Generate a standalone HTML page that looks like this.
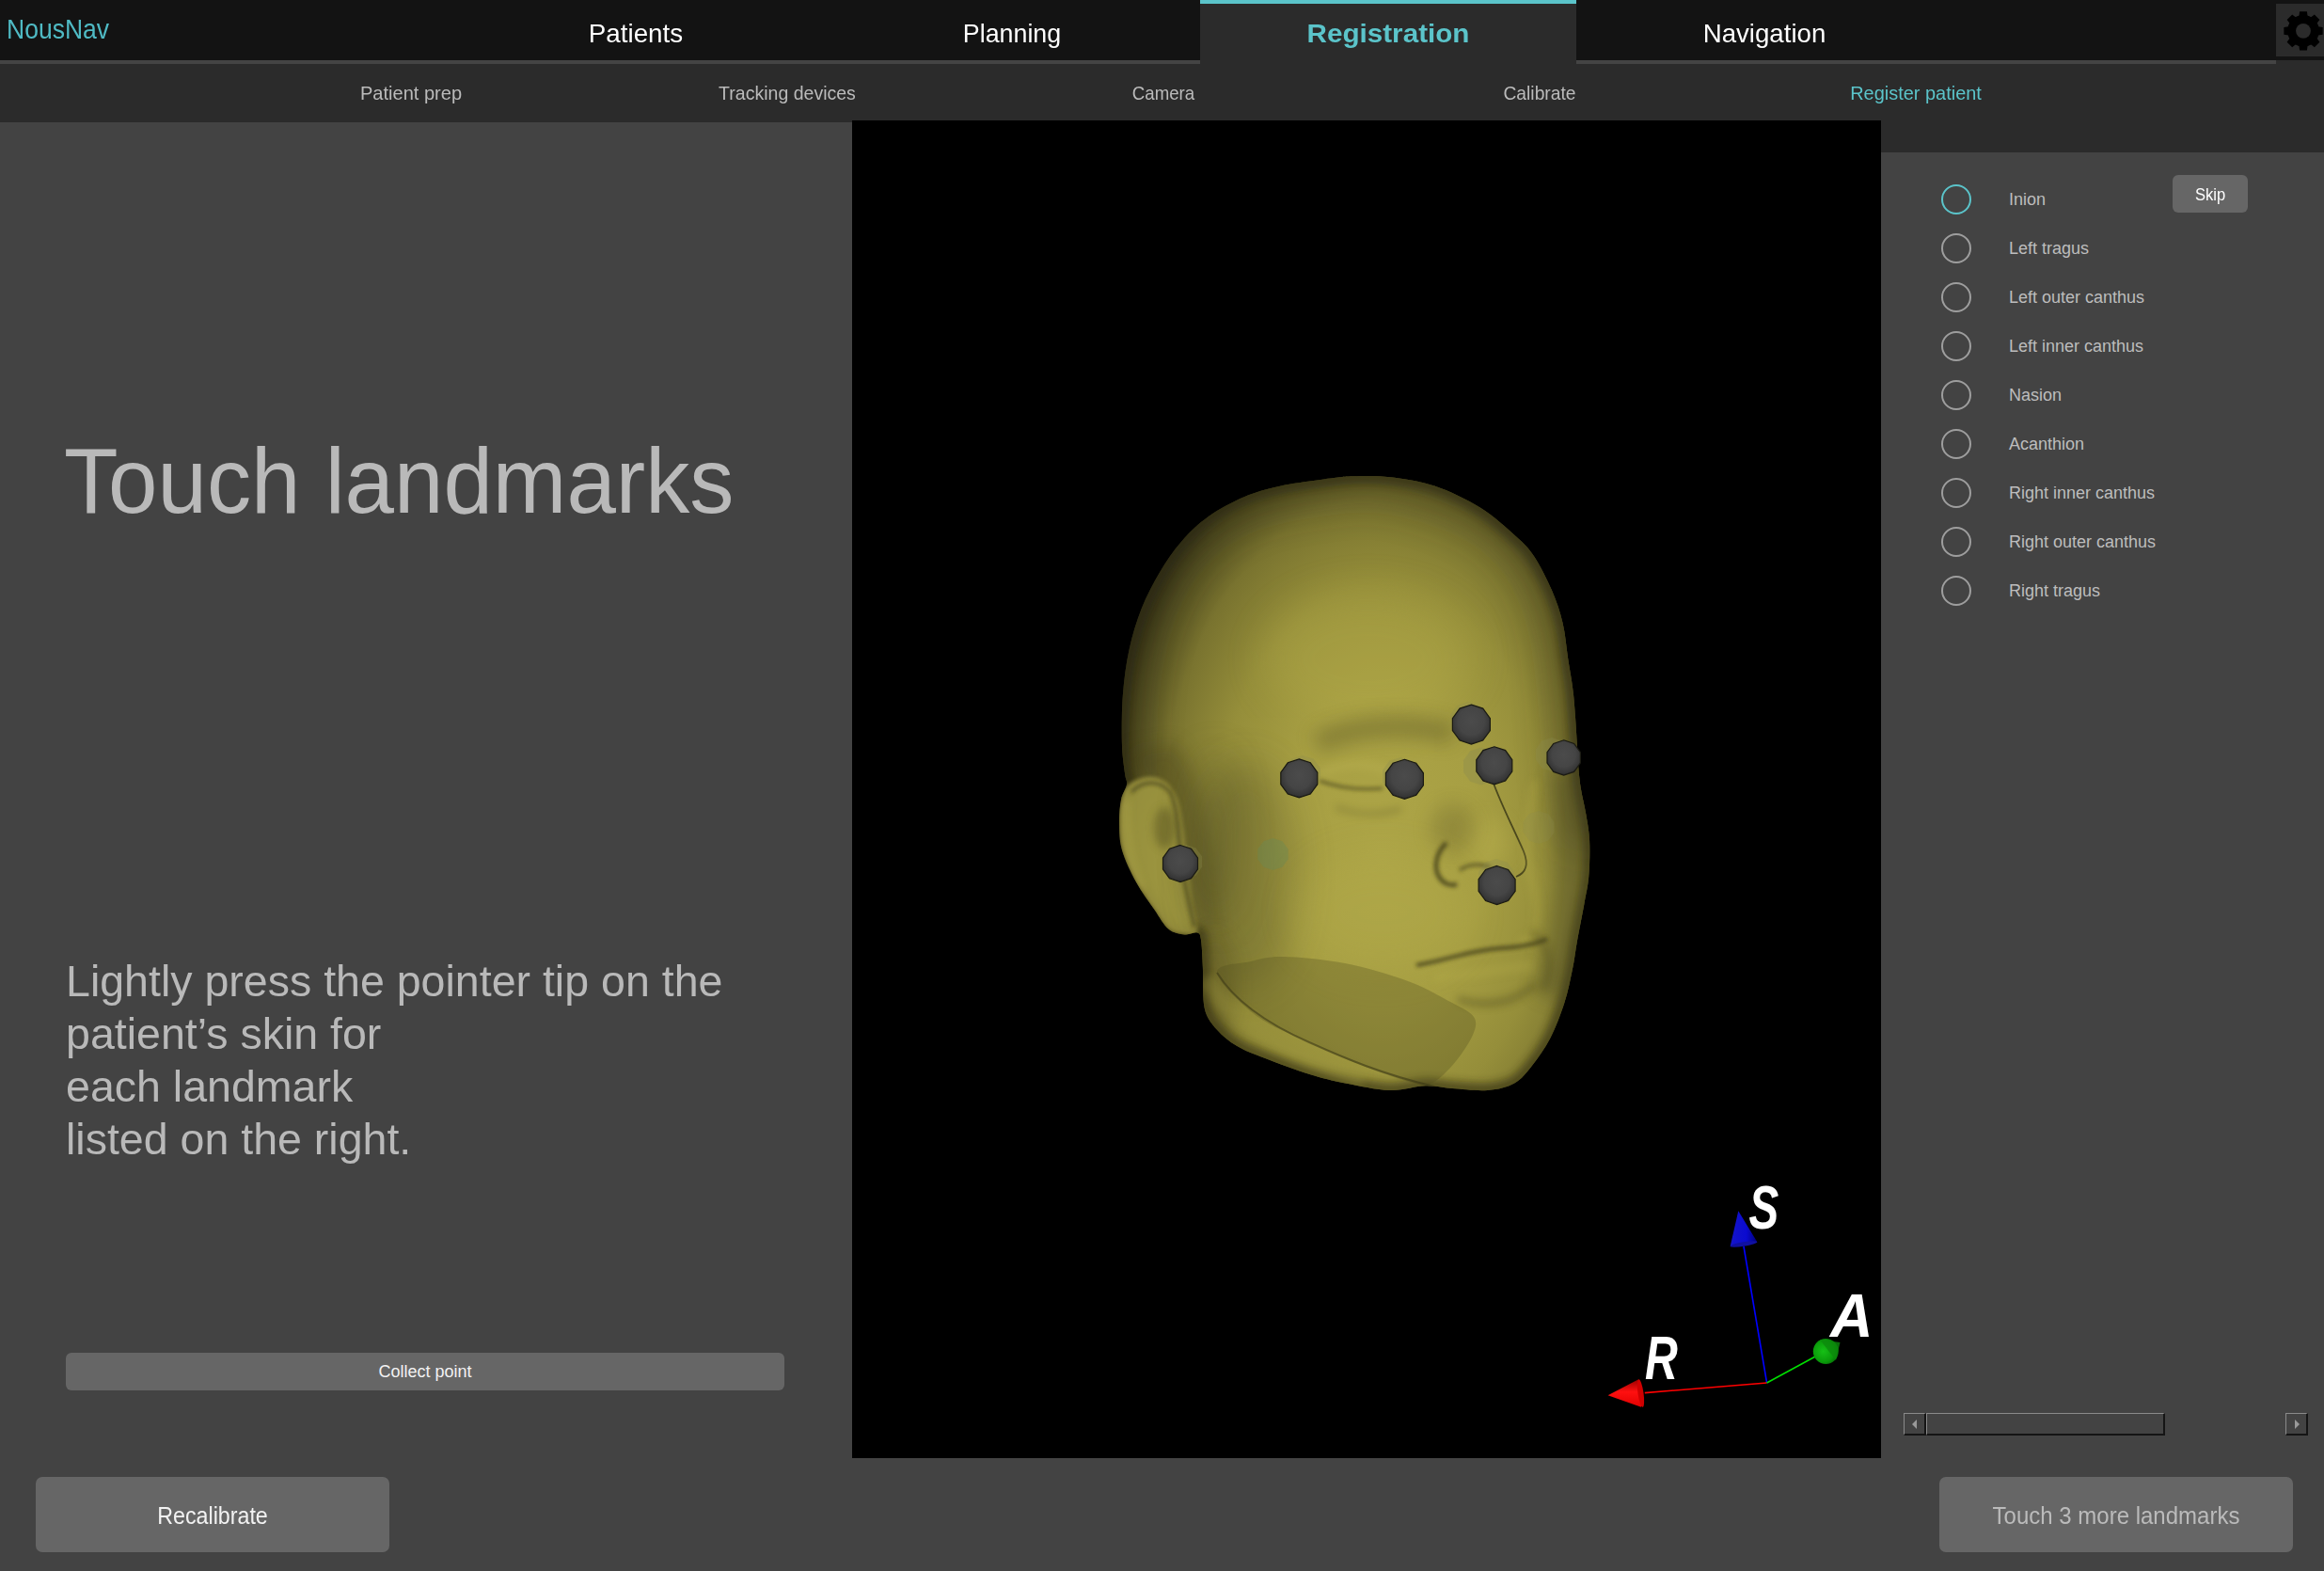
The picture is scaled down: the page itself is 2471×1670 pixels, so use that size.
<!DOCTYPE html>
<html><head><meta charset="utf-8">
<style>
*{margin:0;padding:0;box-sizing:border-box}
html,body{width:2471px;height:1670px;overflow:hidden;background:#434343;font-family:"Liberation Sans",sans-serif;position:relative}
.a{position:absolute}
.t{position:absolute;white-space:nowrap;line-height:1}
</style></head><body>
<!-- top bar -->
<div class="a" style="left:0;top:0;width:2471px;height:64px;background:#131313"></div>
<div class="a" style="left:0;top:64px;width:1276px;height:4px;background:#444"></div>
<div class="a" style="left:1676px;top:64px;width:744px;height:4px;background:#444"></div>
<div class="a" style="left:2420px;top:64px;width:51px;height:4px;background:#2b2b2b"></div>
<div class="a" style="left:1276px;top:0;width:400px;height:68px;background:#2b2b2b"></div>
<div class="a" style="left:1276px;top:0;width:400px;height:4px;background:#5bc4ca"></div>
<div class="a" style="left:2420px;top:4px;width:51px;height:56px;background:#2b2b2b"></div>
<div class="t" style="left:7px;top:17px;font-size:29px;color:#4fbac4;transform:scaleX(0.915);transform-origin:0 0">NousNav</div>
<div class="t" style="left:476px;top:21px;width:400px;text-align:center;font-size:28.5px;color:#fff;transform:scaleX(0.975)">Patients</div>
<div class="t" style="left:876px;top:21px;width:400px;text-align:center;font-size:28.5px;color:#fff;transform:scaleX(0.94)">Planning</div>
<div class="t" style="left:1276px;top:21px;width:400px;text-align:center;font-size:28.5px;color:#5bc4ca;font-weight:bold;transform:scaleX(1.04)">Registration</div>
<div class="t" style="left:1676px;top:21px;width:400px;text-align:center;font-size:28.5px;color:#fff;transform:scaleX(0.97)">Navigation</div>
<!-- sub bar -->
<div class="a" style="left:0;top:68px;width:2471px;height:62px;background:#2b2b2b"></div>
<div class="a" style="left:2000px;top:128px;width:471px;height:34px;background:#2b2b2b"></div>
<div class="t" style="left:237px;top:88px;width:400px;text-align:center;font-size:21px;color:#bbb;transform:scaleX(0.955)">Patient prep</div>
<div class="t" style="left:637px;top:88px;width:400px;text-align:center;font-size:21px;color:#bbb;transform:scaleX(0.93)">Tracking devices</div>
<div class="t" style="left:1037px;top:88px;width:400px;text-align:center;font-size:21px;color:#bbb;transform:scaleX(0.89)">Camera</div>
<div class="t" style="left:1437px;top:88px;width:400px;text-align:center;font-size:21px;color:#bbb;transform:scaleX(0.917)">Calibrate</div>
<div class="t" style="left:1837px;top:88px;width:400px;text-align:center;font-size:21px;color:#5bc4ca;transform:scaleX(0.95)">Register patient</div>
<!-- viewport -->
<div class="a" id="vp" style="left:906px;top:128px;width:1094px;height:1422px;background:#000"></div>
<svg class="a" style="left:906px;top:128px" width="1094" height="1422" viewBox="906 128 1094 1422">
<defs>
<radialGradient id="hg" gradientUnits="userSpaceOnUse" cx="0" cy="0" r="1" gradientTransform="translate(1470 905) scale(300 470)">
<stop offset="0" stop-color="#ada547"/><stop offset="0.35" stop-color="#a79f43"/><stop offset="0.6" stop-color="#958e3a"/><stop offset="0.8" stop-color="#79732f"/><stop offset="0.93" stop-color="#524e20"/><stop offset="1" stop-color="#363318"/></radialGradient>
<radialGradient id="sg" cx="0.5" cy="0.42" r="0.58"><stop offset="0" stop-color="#4b4b4b"/><stop offset="0.6" stop-color="#454545"/><stop offset="0.9" stop-color="#353535"/><stop offset="1" stop-color="#262626"/></radialGradient>
<filter id="b2" filterUnits="userSpaceOnUse" x="906" y="128" width="1094" height="1422"><feGaussianBlur stdDeviation="2"/></filter>
<filter id="b4" filterUnits="userSpaceOnUse" x="906" y="128" width="1094" height="1422"><feGaussianBlur stdDeviation="4"/></filter>
<filter id="b10" filterUnits="userSpaceOnUse" x="906" y="128" width="1094" height="1422"><feGaussianBlur stdDeviation="10"/></filter>
<filter id="b20" filterUnits="userSpaceOnUse" x="906" y="128" width="1094" height="1422"><feGaussianBlur stdDeviation="20"/></filter>
<clipPath id="hc"><path d="M1192.9 790.0 C1192.6 776.0 1192.6 754.8 1193.9 738.2 C1195.2 721.6 1197.3 705.8 1200.6 690.5 C1203.9 675.2 1208.5 660.3 1213.9 646.6 C1219.3 632.9 1226.0 620.2 1233.0 608.4 C1240.0 596.6 1247.3 585.8 1255.9 575.9 C1264.5 566.0 1273.4 557.2 1284.6 549.2 C1295.8 541.2 1310.1 533.6 1322.8 528.2 C1335.5 522.8 1345.1 520.1 1361.0 516.7 C1376.9 513.4 1405.0 509.9 1418.2 508.1 C1431.4 506.4 1430.0 506.4 1440.0 506.2 C1450.0 506.0 1463.9 505.4 1478.2 507.2 C1492.5 508.9 1510.0 511.3 1525.9 516.7 C1541.8 522.1 1559.4 530.7 1573.7 539.6 C1588.0 548.5 1602.4 561.6 1611.9 570.2 C1621.5 578.8 1624.7 581.7 1631.0 591.2 C1637.3 600.8 1644.9 615.7 1650.0 627.5 C1655.1 639.3 1658.6 649.8 1661.5 661.9 C1664.4 674.0 1665.3 687.3 1667.2 700.0 C1669.1 712.7 1671.4 723.2 1673.0 738.2 C1674.6 753.2 1676.0 778.3 1676.8 790.0 C1677.6 801.7 1677.1 800.4 1677.7 808.2 C1678.3 816.0 1679.2 827.2 1680.6 836.8 C1682.0 846.3 1684.7 856.0 1686.3 865.5 C1687.9 875.0 1689.6 883.0 1690.1 894.1 C1690.6 905.2 1690.2 921.1 1689.2 932.3 C1688.2 943.4 1686.4 949.7 1684.4 961.0 C1682.4 972.3 1679.1 988.5 1677.0 1000.0 C1674.9 1011.5 1674.3 1019.0 1672.0 1030.0 C1669.7 1041.0 1667.3 1054.0 1663.3 1066.3 C1659.3 1078.6 1653.8 1093.1 1648.1 1104.1 C1642.4 1115.1 1635.5 1124.6 1629.2 1132.5 C1622.9 1140.4 1618.1 1147.1 1610.2 1151.5 C1602.3 1155.9 1592.8 1158.1 1581.8 1159.0 C1570.8 1159.9 1555.0 1157.9 1544.0 1157.1 C1533.0 1156.3 1526.6 1154.0 1515.6 1154.3 C1504.5 1154.6 1491.9 1159.5 1477.7 1159.0 C1463.5 1158.5 1444.6 1154.3 1430.4 1151.5 C1416.2 1148.7 1406.7 1146.4 1392.5 1142.0 C1378.3 1137.6 1358.1 1130.0 1345.2 1125.0 C1332.3 1120.0 1323.4 1116.8 1314.9 1111.7 C1306.4 1106.7 1299.8 1101.3 1294.1 1094.7 C1288.4 1088.1 1283.3 1083.0 1280.8 1071.9 C1278.3 1060.9 1279.5 1040.6 1278.9 1028.4 C1278.3 1016.3 1278.0 1005.1 1277.0 999.0 C1276.0 992.9 1275.9 992.4 1273.0 991.5 C1270.1 990.6 1264.8 994.0 1259.7 993.4 C1254.6 992.8 1248.0 992.2 1242.6 987.7 C1237.2 983.2 1233.0 975.0 1227.3 966.7 C1221.6 958.4 1213.9 948.5 1208.2 938.0 C1202.5 927.5 1196.0 914.2 1193.0 903.7 C1190.0 893.2 1190.2 884.0 1190.0 875.0 C1189.8 866.0 1190.7 856.8 1192.0 850.0 C1193.3 843.2 1197.3 838.7 1198.0 834.0 C1198.7 829.3 1196.8 829.3 1196.0 822.0 C1195.2 814.7 1193.2 804.0 1192.9 790.0Z"/></clipPath>
</defs>
<path d="M1192.9 790.0 C1192.6 776.0 1192.6 754.8 1193.9 738.2 C1195.2 721.6 1197.3 705.8 1200.6 690.5 C1203.9 675.2 1208.5 660.3 1213.9 646.6 C1219.3 632.9 1226.0 620.2 1233.0 608.4 C1240.0 596.6 1247.3 585.8 1255.9 575.9 C1264.5 566.0 1273.4 557.2 1284.6 549.2 C1295.8 541.2 1310.1 533.6 1322.8 528.2 C1335.5 522.8 1345.1 520.1 1361.0 516.7 C1376.9 513.4 1405.0 509.9 1418.2 508.1 C1431.4 506.4 1430.0 506.4 1440.0 506.2 C1450.0 506.0 1463.9 505.4 1478.2 507.2 C1492.5 508.9 1510.0 511.3 1525.9 516.7 C1541.8 522.1 1559.4 530.7 1573.7 539.6 C1588.0 548.5 1602.4 561.6 1611.9 570.2 C1621.5 578.8 1624.7 581.7 1631.0 591.2 C1637.3 600.8 1644.9 615.7 1650.0 627.5 C1655.1 639.3 1658.6 649.8 1661.5 661.9 C1664.4 674.0 1665.3 687.3 1667.2 700.0 C1669.1 712.7 1671.4 723.2 1673.0 738.2 C1674.6 753.2 1676.0 778.3 1676.8 790.0 C1677.6 801.7 1677.1 800.4 1677.7 808.2 C1678.3 816.0 1679.2 827.2 1680.6 836.8 C1682.0 846.3 1684.7 856.0 1686.3 865.5 C1687.9 875.0 1689.6 883.0 1690.1 894.1 C1690.6 905.2 1690.2 921.1 1689.2 932.3 C1688.2 943.4 1686.4 949.7 1684.4 961.0 C1682.4 972.3 1679.1 988.5 1677.0 1000.0 C1674.9 1011.5 1674.3 1019.0 1672.0 1030.0 C1669.7 1041.0 1667.3 1054.0 1663.3 1066.3 C1659.3 1078.6 1653.8 1093.1 1648.1 1104.1 C1642.4 1115.1 1635.5 1124.6 1629.2 1132.5 C1622.9 1140.4 1618.1 1147.1 1610.2 1151.5 C1602.3 1155.9 1592.8 1158.1 1581.8 1159.0 C1570.8 1159.9 1555.0 1157.9 1544.0 1157.1 C1533.0 1156.3 1526.6 1154.0 1515.6 1154.3 C1504.5 1154.6 1491.9 1159.5 1477.7 1159.0 C1463.5 1158.5 1444.6 1154.3 1430.4 1151.5 C1416.2 1148.7 1406.7 1146.4 1392.5 1142.0 C1378.3 1137.6 1358.1 1130.0 1345.2 1125.0 C1332.3 1120.0 1323.4 1116.8 1314.9 1111.7 C1306.4 1106.7 1299.8 1101.3 1294.1 1094.7 C1288.4 1088.1 1283.3 1083.0 1280.8 1071.9 C1278.3 1060.9 1279.5 1040.6 1278.9 1028.4 C1278.3 1016.3 1278.0 1005.1 1277.0 999.0 C1276.0 992.9 1275.9 992.4 1273.0 991.5 C1270.1 990.6 1264.8 994.0 1259.7 993.4 C1254.6 992.8 1248.0 992.2 1242.6 987.7 C1237.2 983.2 1233.0 975.0 1227.3 966.7 C1221.6 958.4 1213.9 948.5 1208.2 938.0 C1202.5 927.5 1196.0 914.2 1193.0 903.7 C1190.0 893.2 1190.2 884.0 1190.0 875.0 C1189.8 866.0 1190.7 856.8 1192.0 850.0 C1193.3 843.2 1197.3 838.7 1198.0 834.0 C1198.7 829.3 1196.8 829.3 1196.0 822.0 C1195.2 814.7 1193.2 804.0 1192.9 790.0Z" fill="url(#hg)"/>
<g clip-path="url(#hc)">
<path d="M1192.9 790.0 C1192.6 776.0 1192.6 754.8 1193.9 738.2 C1195.2 721.6 1197.3 705.8 1200.6 690.5 C1203.9 675.2 1208.5 660.3 1213.9 646.6 C1219.3 632.9 1226.0 620.2 1233.0 608.4 C1240.0 596.6 1247.3 585.8 1255.9 575.9 C1264.5 566.0 1273.4 557.2 1284.6 549.2 C1295.8 541.2 1310.1 533.6 1322.8 528.2 C1335.5 522.8 1345.1 520.1 1361.0 516.7 C1376.9 513.4 1405.0 509.9 1418.2 508.1 C1431.4 506.4 1430.0 506.4 1440.0 506.2 C1450.0 506.0 1463.9 505.4 1478.2 507.2 C1492.5 508.9 1510.0 511.3 1525.9 516.7 C1541.8 522.1 1559.4 530.7 1573.7 539.6 C1588.0 548.5 1602.4 561.6 1611.9 570.2 C1621.5 578.8 1624.7 581.7 1631.0 591.2 C1637.3 600.8 1644.9 615.7 1650.0 627.5 C1655.1 639.3 1658.6 649.8 1661.5 661.9 C1664.4 674.0 1665.3 687.3 1667.2 700.0 C1669.1 712.7 1671.4 723.2 1673.0 738.2 C1674.6 753.2 1676.0 778.3 1676.8 790.0 C1677.6 801.7 1677.1 800.4 1677.7 808.2 C1678.3 816.0 1679.2 827.2 1680.6 836.8 C1682.0 846.3 1684.7 856.0 1686.3 865.5 C1687.9 875.0 1689.6 883.0 1690.1 894.1 C1690.6 905.2 1690.2 921.1 1689.2 932.3 C1688.2 943.4 1686.4 949.7 1684.4 961.0 C1682.4 972.3 1679.1 988.5 1677.0 1000.0 C1674.9 1011.5 1674.3 1019.0 1672.0 1030.0 C1669.7 1041.0 1667.3 1054.0 1663.3 1066.3 C1659.3 1078.6 1653.8 1093.1 1648.1 1104.1 C1642.4 1115.1 1635.5 1124.6 1629.2 1132.5 C1622.9 1140.4 1618.1 1147.1 1610.2 1151.5 C1602.3 1155.9 1592.8 1158.1 1581.8 1159.0 C1570.8 1159.9 1555.0 1157.9 1544.0 1157.1 C1533.0 1156.3 1526.6 1154.0 1515.6 1154.3 C1504.5 1154.6 1491.9 1159.5 1477.7 1159.0 C1463.5 1158.5 1444.6 1154.3 1430.4 1151.5 C1416.2 1148.7 1406.7 1146.4 1392.5 1142.0 C1378.3 1137.6 1358.1 1130.0 1345.2 1125.0 C1332.3 1120.0 1323.4 1116.8 1314.9 1111.7 C1306.4 1106.7 1299.8 1101.3 1294.1 1094.7 C1288.4 1088.1 1283.3 1083.0 1280.8 1071.9 C1278.3 1060.9 1279.5 1040.6 1278.9 1028.4 C1278.3 1016.3 1278.0 1005.1 1277.0 999.0 C1276.0 992.9 1275.9 992.4 1273.0 991.5 C1270.1 990.6 1264.8 994.0 1259.7 993.4 C1254.6 992.8 1248.0 992.2 1242.6 987.7 C1237.2 983.2 1233.0 975.0 1227.3 966.7 C1221.6 958.4 1213.9 948.5 1208.2 938.0 C1202.5 927.5 1196.0 914.2 1193.0 903.7 C1190.0 893.2 1190.2 884.0 1190.0 875.0 C1189.8 866.0 1190.7 856.8 1192.0 850.0 C1193.3 843.2 1197.3 838.7 1198.0 834.0 C1198.7 829.3 1196.8 829.3 1196.0 822.0 C1195.2 814.7 1193.2 804.0 1192.9 790.0Z" fill="none" stroke="#2a2810" stroke-width="16" opacity="0.6" filter="url(#b4)"/>
<path d="M1192.0 860.0 C1192.3 839.7 1190.2 773.8 1193.9 738.2 C1197.6 702.6 1203.6 673.7 1213.9 646.6 C1224.2 619.5 1237.8 595.6 1255.9 575.9 C1274.1 556.2 1295.8 539.5 1322.8 528.2 C1349.8 516.9 1392.3 511.6 1418.2 508.1 C1444.1 504.6 1452.3 501.9 1478.2 507.2 C1504.1 512.5 1548.2 525.6 1573.7 539.6 C1599.2 553.6 1616.4 570.8 1631.0 591.2 C1645.6 611.6 1654.5 637.4 1661.5 661.9 C1668.5 686.4 1669.8 709.1 1673.0 738.2 C1676.2 767.4 1677.8 809.8 1680.6 836.8 C1683.4 863.8 1688.4 889.5 1690.0 900.0" fill="none" stroke="#2e2b12" stroke-width="50" opacity="0.4" filter="url(#b20)"/>
<path d="M1195 800 C1230 830 1250 900 1270 990 L1300 990 C1290 900 1280 830 1250 790 Z" fill="#3c3917" opacity="0.35" filter="url(#b10)"/>
<path d="M1200.0 834.0 C1205.0 830.0 1215.3 826.3 1222.0 826.0 C1228.7 825.7 1235.0 828.0 1240.0 832.0 C1245.0 836.0 1249.0 842.0 1252.0 850.0 C1255.0 858.0 1256.2 868.3 1258.0 880.0 C1259.8 891.7 1261.3 906.7 1263.0 920.0 C1264.7 933.3 1266.3 948.2 1268.0 960.0 C1269.7 971.8 1274.3 985.5 1273.0 991.0 C1271.7 996.5 1265.0 993.5 1260.0 993.0 C1255.0 992.5 1248.5 992.3 1243.0 988.0 C1237.5 983.7 1232.8 975.3 1227.0 967.0 C1221.2 958.7 1213.7 948.5 1208.0 938.0 C1202.3 927.5 1196.0 914.5 1193.0 904.0 C1190.0 893.5 1190.2 884.0 1190.0 875.0 C1189.8 866.0 1190.3 856.8 1192.0 850.0 C1193.7 843.2 1195.0 838.0 1200.0 834.0Z" fill="#a29a42" opacity="0.85" filter="url(#b2)"/>
<path d="M1203 842 C1214 830 1232 828 1244 842 C1254 860 1252 900 1258 930 C1262 950 1266 970 1270 985" fill="none" stroke="#3a3716" stroke-width="3.5" opacity="0.65" filter="url(#b2)"/>
<ellipse cx="1238" cy="880" rx="11" ry="22" fill="#5a5524" opacity="0.5" filter="url(#b4)"/>
<path d="M1198 850 C1196 880 1200 915 1215 945" fill="none" stroke="#c4bb55" stroke-width="6" opacity="0.35" filter="url(#b4)"/>
<ellipse cx="1325" cy="930" rx="55" ry="120" fill="#4a4620" opacity="0.3" filter="url(#b20)"/>
<ellipse cx="1292" cy="1050" rx="22" ry="60" fill="#3c3917" opacity="0.3" filter="url(#b10)"/>
<ellipse cx="1292" cy="890" rx="22" ry="90" fill="#4a4620" opacity="0.35" filter="url(#b20)"/>
<ellipse cx="1455" cy="700" rx="110" ry="70" fill="#b2aa4a" opacity="0.35" filter="url(#b20)"/>
<ellipse cx="1470" cy="970" rx="90" ry="60" fill="#b4ac4b" opacity="0.35" filter="url(#b20)"/>
<path d="M1400 790 C1440 770 1500 768 1545 780" fill="none" stroke="#5a5523" stroke-width="22" opacity="0.45" filter="url(#b10)"/>
<path d="M1405 822 C1430 808 1465 810 1485 826" fill="none" stroke="#bdb452" stroke-width="10" opacity="0.35" filter="url(#b4)"/>
<path d="M1403 830 C1425 838 1450 840 1470 838" fill="none" stroke="#3e3b18" stroke-width="3" opacity="0.65" filter="url(#b2)"/>
<path d="M1420 858 C1445 868 1470 866 1490 860" fill="none" stroke="#5a5523" stroke-width="5" opacity="0.35" filter="url(#b4)"/>
<ellipse cx="1582" cy="895" rx="22" ry="26" fill="#b8af4e" opacity="0.45" filter="url(#b10)"/>
<ellipse cx="1545" cy="880" rx="24" ry="26" fill="#5e5925" opacity="0.28" filter="url(#b10)"/>
<path d="M1538 896 C1527 906 1524 922 1530 932 C1535 940 1543 942 1549 940" fill="none" stroke="#363315" stroke-width="4.5" opacity="0.75" filter="url(#b2)"/>
<path d="M1552 925 C1562 918 1575 918 1585 922" fill="none" stroke="#363315" stroke-width="3.5" opacity="0.6" filter="url(#b2)"/>
<path d="M1587 830 C1596 855 1608 878 1620 905 C1626 920 1622 928 1612 932" fill="none" stroke="#2e2c12" stroke-width="1.8" opacity="0.75"/>
<path d="M1632 830 C1626 870 1618 900 1630 940 C1640 980 1632 1000 1615 1002" fill="none" stroke="#c0b650" stroke-width="8" opacity="0.25" filter="url(#b4)"/>
<path d="M1668 820 C1675 930 1668 1000 1648 1060" fill="none" stroke="#4a4620" stroke-width="36" opacity="0.4" filter="url(#b10)"/>
<path d="M1506 1026 C1540 1020 1565 1010 1595 1008 C1615 1007 1632 1004 1645 998" fill="none" stroke="#363315" stroke-width="4" opacity="0.75" filter="url(#b2)"/>
<path d="M1525 1040 C1560 1036 1600 1030 1630 1026" fill="none" stroke="#b6ad4c" stroke-width="10" opacity="0.3" filter="url(#b4)"/>
<path d="M1550 1062 C1580 1072 1612 1066 1632 1046" fill="none" stroke="#4e4a1f" stroke-width="7" opacity="0.45" filter="url(#b4)"/>
<path d="M1628 990 C1648 1005 1652 1030 1640 1052" fill="none" stroke="#4e4a1f" stroke-width="8" opacity="0.35" filter="url(#b4)"/>
<path d="M1294.0 1034.0 C1293.0 1024.3 1318.3 1024.8 1330.0 1022.0 C1341.7 1019.2 1347.3 1016.7 1364.0 1017.0 C1380.7 1017.3 1407.8 1019.7 1430.0 1024.0 C1452.2 1028.3 1478.0 1036.0 1497.0 1043.0 C1516.0 1050.0 1532.3 1059.7 1544.0 1066.0 C1555.7 1072.3 1563.3 1075.3 1567.0 1081.0 C1570.7 1086.7 1569.2 1092.2 1566.0 1100.0 C1562.8 1107.8 1554.8 1119.7 1548.0 1128.0 C1541.2 1136.3 1532.0 1146.0 1525.0 1150.0 C1518.0 1154.0 1518.7 1154.8 1506.0 1152.0 C1493.3 1149.2 1468.0 1140.3 1449.0 1133.0 C1430.0 1125.7 1410.8 1116.8 1392.0 1108.0 C1373.2 1099.2 1352.3 1092.3 1336.0 1080.0 C1319.7 1067.7 1295.0 1043.7 1294.0 1034.0Z" fill="#4f4b1f" opacity="0.3"/>
<path d="M1294 1034 C1310 1060 1340 1085 1392 1108 C1430 1125 1470 1142 1525 1155" fill="none" stroke="#3a3716" stroke-width="2" opacity="0.6"/>
<path d="M1282 1040 C1300 1075 1350 1110 1450 1148" fill="none" stroke="#9a933e" stroke-width="18" opacity="0.35" filter="url(#b4)"/>
</g>
<polygon points="1636.0,861.9 1646.3,865.2 1652.6,874.0 1652.6,884.8 1646.3,893.6 1636.0,896.9 1625.7,893.6 1619.4,884.8 1619.4,874.0 1625.7,865.2" fill="#8a8a50" opacity="0.25"/>
<polygon points="1575.0,794.5 1586.8,798.3 1594.0,808.3 1594.0,820.7 1586.8,830.7 1575.0,834.5 1563.2,830.7 1556.0,820.7 1556.0,808.3 1563.2,798.3" fill="#8a8a50" opacity="0.35"/>
<polygon points="1650.0,784.0 1660.6,787.4 1667.1,796.4 1667.1,807.6 1660.6,816.6 1650.0,820.0 1639.4,816.6 1632.9,807.6 1632.9,796.4 1639.4,787.4" fill="#8a8a50" opacity="0.30"/>
<polygon points="1591.0,913.0 1602.8,916.8 1610.0,926.8 1610.0,939.2 1602.8,949.2 1591.0,953.0 1579.2,949.2 1572.0,939.2 1572.0,926.8 1579.2,916.8" fill="#8a8a50" opacity="0.30"/>
<polygon points="1261.0,898.0 1271.6,901.4 1278.1,910.4 1278.1,921.6 1271.6,930.6 1261.0,934.0 1250.4,930.6 1243.9,921.6 1243.9,910.4 1250.4,901.4" fill="#8a8a50" opacity="0.30"/>
<polygon points="1385.0,803.0 1396.8,806.8 1404.0,816.8 1404.0,829.2 1396.8,839.2 1385.0,843.0 1373.2,839.2 1366.0,829.2 1366.0,816.8 1373.2,806.8" fill="#8a8a50" opacity="0.30"/>
<polygon points="1489.0,805.0 1500.8,808.8 1508.0,818.8 1508.0,831.2 1500.8,841.2 1489.0,845.0 1477.2,841.2 1470.0,831.2 1470.0,818.8 1477.2,808.8" fill="#8a8a50" opacity="0.30"/>
<polygon points="1561.0,746.0 1572.8,749.8 1580.0,759.8 1580.0,772.2 1572.8,782.2 1561.0,786.0 1549.2,782.2 1542.0,772.2 1542.0,759.8 1549.2,749.8" fill="#8a8a50" opacity="0.25"/>
<polygon points="1255.0,898.5 1266.5,902.2 1273.5,912.0 1273.5,924.0 1266.5,933.8 1255.0,937.5 1243.5,933.8 1236.5,924.0 1236.5,912.0 1243.5,902.2" fill="url(#sg)" stroke="#1a1a12" stroke-width="1.2"/>
<polygon points="1381.3,806.9 1393.3,810.8 1400.8,821.1 1400.8,833.7 1393.3,844.0 1381.3,847.9 1369.3,844.0 1361.8,833.7 1361.8,821.1 1369.3,810.8" fill="url(#sg)" stroke="#1a1a12" stroke-width="1.2"/>
<polygon points="1493.4,807.3 1505.7,811.3 1513.4,821.8 1513.4,834.8 1505.7,845.3 1493.4,849.3 1481.1,845.3 1473.4,834.8 1473.4,821.8 1481.1,811.3" fill="url(#sg)" stroke="#1a1a12" stroke-width="1.2"/>
<polygon points="1564.4,749.1 1576.7,753.1 1584.4,763.6 1584.4,776.6 1576.7,787.1 1564.4,791.1 1552.1,787.1 1544.4,776.6 1544.4,763.6 1552.1,753.1" fill="url(#sg)" stroke="#1a1a12" stroke-width="1.2"/>
<polygon points="1588.8,793.8 1600.6,797.6 1607.8,807.6 1607.8,820.0 1600.6,830.0 1588.8,833.8 1577.0,830.0 1569.8,820.0 1569.8,807.6 1577.0,797.6" fill="url(#sg)" stroke="#1a1a12" stroke-width="1.2"/>
<polygon points="1662.7,786.8 1673.6,790.4 1680.4,799.7 1680.4,811.1 1673.6,820.4 1662.7,824.0 1651.8,820.4 1645.0,811.1 1645.0,799.7 1651.8,790.4" fill="url(#sg)" stroke="#1a1a12" stroke-width="1.2"/>
<polygon points="1591.6,920.5 1603.6,924.4 1611.1,934.7 1611.1,947.3 1603.6,957.6 1591.6,961.5 1579.6,957.6 1572.1,947.3 1572.1,934.7 1579.6,924.4" fill="url(#sg)" stroke="#1a1a12" stroke-width="1.2"/>
<polygon points="1353.5,891.0 1363.5,894.2 1369.7,902.7 1369.7,913.3 1363.5,921.8 1353.5,925.0 1343.5,921.8 1337.3,913.3 1337.3,902.7 1343.5,894.2" fill="#6a8a55" opacity="0.4"/>
<defs><linearGradient id="bc" x1="0" y1="0" x2="1" y2="0"><stop offset="0" stop-color="#1515c8"/><stop offset="0.6" stop-color="#0a0ad0"/><stop offset="1" stop-color="#00007a"/></linearGradient><linearGradient id="rc" x1="0" y1="0" x2="0" y2="1"><stop offset="0" stop-color="#9a0000"/><stop offset="0.45" stop-color="#ff1010"/><stop offset="1" stop-color="#e00000"/></linearGradient><radialGradient id="gc" cx="0.4" cy="0.5" r="0.6"><stop offset="0" stop-color="#16c016"/><stop offset="0.7" stop-color="#0a9a0a"/><stop offset="1" stop-color="#067006"/></radialGradient></defs>
<line x1="1878.6" y1="1470" x2="1854" y2="1325" stroke="#0000ff" stroke-width="1.6"/>
<line x1="1878.6" y1="1470" x2="1748.8" y2="1480.6" stroke="#ff0000" stroke-width="1.6"/>
<line x1="1878.6" y1="1470" x2="1929.7" y2="1442.3" stroke="#00e000" stroke-width="1.6"/>
<polygon points="1848.3,1287.2 1868.3,1320.2 1855,1324 1839.7,1324.7" fill="url(#bc)"/>
<ellipse cx="1854" cy="1322.5" rx="14.5" ry="2.2" transform="rotate(-9 1854 1322.5)" fill="#1010a0"/>
<polygon points="1709.6,1483.3 1741.7,1466.4 1747,1480 1745,1495.8" fill="url(#rc)"/>
<ellipse cx="1744.5" cy="1481" rx="3" ry="15" transform="rotate(-8 1744.5 1481)" fill="#d00000"/>
<circle cx="1941.3" cy="1436.5" r="13.5" fill="url(#gc)"/>
<polygon points="1935,1424 1956.5,1427 1952,1446" fill="#0c8a0c" opacity="0.8"/>
<text x="1859.5" y="1306.5" font-family="Liberation Sans" font-weight="bold" font-style="italic" font-size="64" fill="#fff" transform="translate(1859.5 0) scale(0.743 1) translate(-1859.5 0)">S</text>
<text x="1749" y="1466.4" font-family="Liberation Sans" font-weight="bold" font-style="italic" font-size="64" fill="#fff" transform="translate(1749 0) scale(0.753 1) translate(-1749 0)">R</text>
<text x="1946" y="1421" font-family="Liberation Sans" font-weight="bold" font-style="italic" font-size="64" fill="#fff" transform="translate(1946 0) scale(0.984 1) translate(-1946 0)">A</text>
</svg>
<!-- left panel -->
<div class="t" style="left:68px;top:461px;font-size:99px;color:#b9b9b9;transform:scaleX(0.952);transform-origin:0 0">Touch landmarks</div>
<div class="a" style="left:70px;top:1015px;font-size:47px;line-height:56px;color:#b9b9b9;white-space:nowrap;transform:scaleX(0.99);transform-origin:0 0">Lightly press the pointer tip on the<br>patient’s skin for<br>each landmark<br>listed on the right.</div>
<div class="a" style="left:70px;top:1438px;width:764px;height:40px;background:#666;border-radius:6px"></div>
<div class="t" style="left:70px;top:1449px;width:764px;text-align:center;font-size:18px;color:#f2f2f2">Collect point</div>
<div class="a" style="left:38px;top:1570px;width:376px;height:80px;background:#666;border-radius:7px"></div>
<div class="t" style="left:38px;top:1599px;width:376px;text-align:center;font-size:25px;color:#f2f2f2;transform:scaleX(0.93)">Recalibrate</div>
<div class="a" style="left:2062px;top:1570px;width:376px;height:80px;background:#666;border-radius:7px"></div>
<div class="t" style="left:2062px;top:1599px;width:376px;text-align:center;font-size:25px;color:#bbb;transform:scaleX(0.96)">Touch 3 more landmarks</div>
<!-- right panel -->
<div class="a" style="left:2310px;top:186px;width:80px;height:40px;background:#666;border-radius:6px"></div>
<div class="t" id="skip" style="left:2310px;top:198px;width:80px;text-align:center;font-size:18px;color:#fff;transform:scaleX(0.92)">Skip</div>
<div class="a" style="left:2064px;top:196px;width:32px;height:32px;border:2px solid #5bc4ca;border-radius:50%"></div>
<div class="t" style="left:2136px;top:203px;font-size:18px;color:#bdbdbd">Inion</div>
<div class="a" style="left:2064px;top:248px;width:32px;height:32px;border:2px solid #9e9e9e;border-radius:50%"></div>
<div class="t" style="left:2136px;top:255px;font-size:18px;color:#bdbdbd">Left tragus</div>
<div class="a" style="left:2064px;top:300px;width:32px;height:32px;border:2px solid #9e9e9e;border-radius:50%"></div>
<div class="t" style="left:2136px;top:307px;font-size:18px;color:#bdbdbd">Left outer canthus</div>
<div class="a" style="left:2064px;top:352px;width:32px;height:32px;border:2px solid #9e9e9e;border-radius:50%"></div>
<div class="t" style="left:2136px;top:359px;font-size:18px;color:#bdbdbd">Left inner canthus</div>
<div class="a" style="left:2064px;top:404px;width:32px;height:32px;border:2px solid #9e9e9e;border-radius:50%"></div>
<div class="t" style="left:2136px;top:411px;font-size:18px;color:#bdbdbd">Nasion</div>
<div class="a" style="left:2064px;top:456px;width:32px;height:32px;border:2px solid #9e9e9e;border-radius:50%"></div>
<div class="t" style="left:2136px;top:463px;font-size:18px;color:#bdbdbd">Acanthion</div>
<div class="a" style="left:2064px;top:508px;width:32px;height:32px;border:2px solid #9e9e9e;border-radius:50%"></div>
<div class="t" style="left:2136px;top:515px;font-size:18px;color:#bdbdbd">Right inner canthus</div>
<div class="a" style="left:2064px;top:560px;width:32px;height:32px;border:2px solid #9e9e9e;border-radius:50%"></div>
<div class="t" style="left:2136px;top:567px;font-size:18px;color:#bdbdbd">Right outer canthus</div>
<div class="a" style="left:2064px;top:612px;width:32px;height:32px;border:2px solid #9e9e9e;border-radius:50%"></div>
<div class="t" style="left:2136px;top:619px;font-size:18px;color:#bdbdbd">Right tragus</div>
<div class="a" style="left:2024px;top:1502px;width:24px;height:24px;background:#434343;border-top:1px solid #8a8a8a;border-left:1px solid #8a8a8a;border-right:2px solid #151515;border-bottom:2px solid #151515"></div>
<div class="a" style="left:2033px;top:1509px;width:0;height:0;border-top:5px solid transparent;border-bottom:5px solid transparent;border-right:5px solid #9a9a9a"></div>
<div class="a" style="left:2048px;top:1502px;width:254px;height:24px;background:#434343;border-top:1px solid #8a8a8a;border-left:1px solid #8a8a8a;border-right:2px solid #151515;border-bottom:2px solid #151515"></div>
<div class="a" style="left:2430px;top:1502px;width:24px;height:24px;background:#434343;border-top:1px solid #8a8a8a;border-left:1px solid #8a8a8a;border-right:2px solid #151515;border-bottom:2px solid #151515"></div>
<div class="a" style="left:2440px;top:1509px;width:0;height:0;border-top:5px solid transparent;border-bottom:5px solid transparent;border-left:5px solid #9a9a9a"></div>
<svg class="a" style="left:2420px;top:4px" width="51" height="56" viewBox="2420 4 51 56"><circle cx="2449.0" cy="32.8" r="16.8" fill="#000"/><polygon points="2444.40,17.16 2445.10,12.17 2452.90,12.17 2453.60,17.16 2456.80,18.49 2460.83,15.45 2466.35,20.97 2463.31,25.00 2464.64,28.20 2469.63,28.90 2469.63,36.70 2464.64,37.40 2463.31,40.60 2466.35,44.63 2460.83,50.15 2456.80,47.11 2453.60,48.44 2452.90,53.43 2445.10,53.43 2444.40,48.44 2441.20,47.11 2437.17,50.15 2431.65,44.63 2434.69,40.60 2433.36,37.40 2428.37,36.70 2428.37,28.90 2433.36,28.20 2434.69,25.00 2431.65,20.97 2437.17,15.45 2441.20,18.49" fill="#000"/><circle cx="2449.0" cy="32.8" r="7.9" fill="#2b2b2b"/></svg>
</body></html>
